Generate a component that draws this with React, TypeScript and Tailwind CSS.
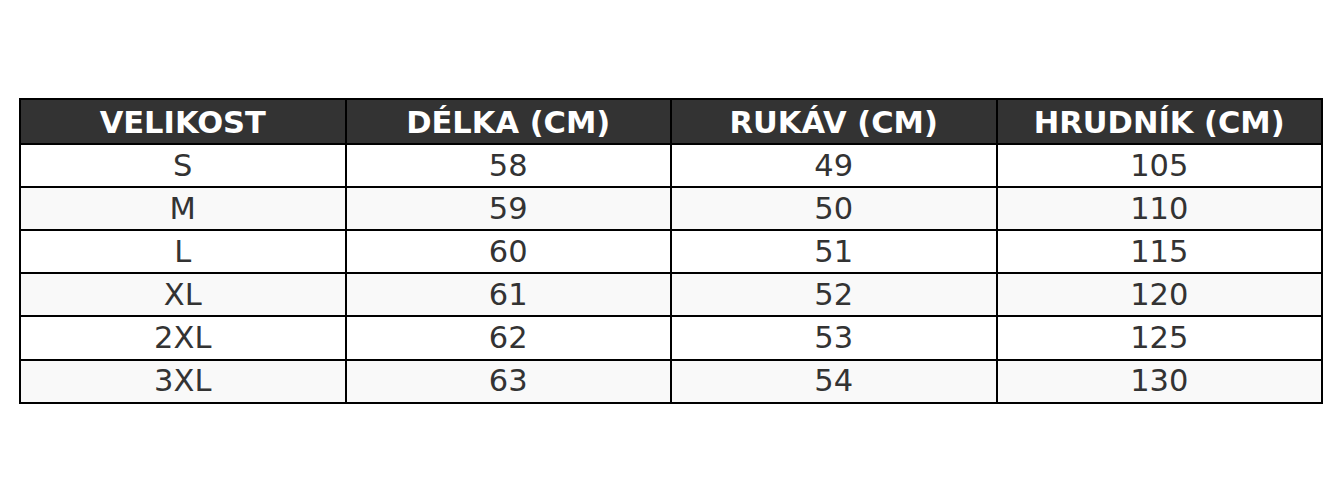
import React from "react";

const rows = [
  ["S", "58", "49", "105"],
  ["M", "59", "50", "110"],
  ["L", "60", "51", "115"],
  ["XL", "61", "52", "120"],
  ["2XL", "62", "53", "125"],
  ["3XL", "63", "54", "130"],
];

const headers = ["VELIKOST", "DÉLKA (CM)", "RUKÁV (CM)", "HRUDNÍK (CM)"];

export default function App() {
  return (
    <div className="flex h-[502px] w-full items-center justify-center bg-white font-['DejaVu_Sans',sans-serif]">
      <table className="w-[1304px] table-fixed border-collapse border-[2.5px] border-black text-center text-[30.5px] leading-none">
        <thead>
          <tr className="bg-[#333333] text-white">
            {headers.map((h) => (
              <th key={h} className="h-[44.5px] border-[2.5px] border-black p-0 pt-1 font-bold">
                {h}
              </th>
            ))}
          </tr>
        </thead>
        <tbody>
          {rows.map((row, i) => (
            <tr key={row[0]} className={i % 2 === 1 ? "bg-[#f9f9f9]" : "bg-white"}>
              {row.map((cell, j) => (
                <td key={j} className="h-[43.2px] border-[2.5px] border-black p-0 pt-[1px] text-[#333333]">
                  {cell}
                </td>
              ))}
            </tr>
          ))}
        </tbody>
      </table>
    </div>
  );
}
